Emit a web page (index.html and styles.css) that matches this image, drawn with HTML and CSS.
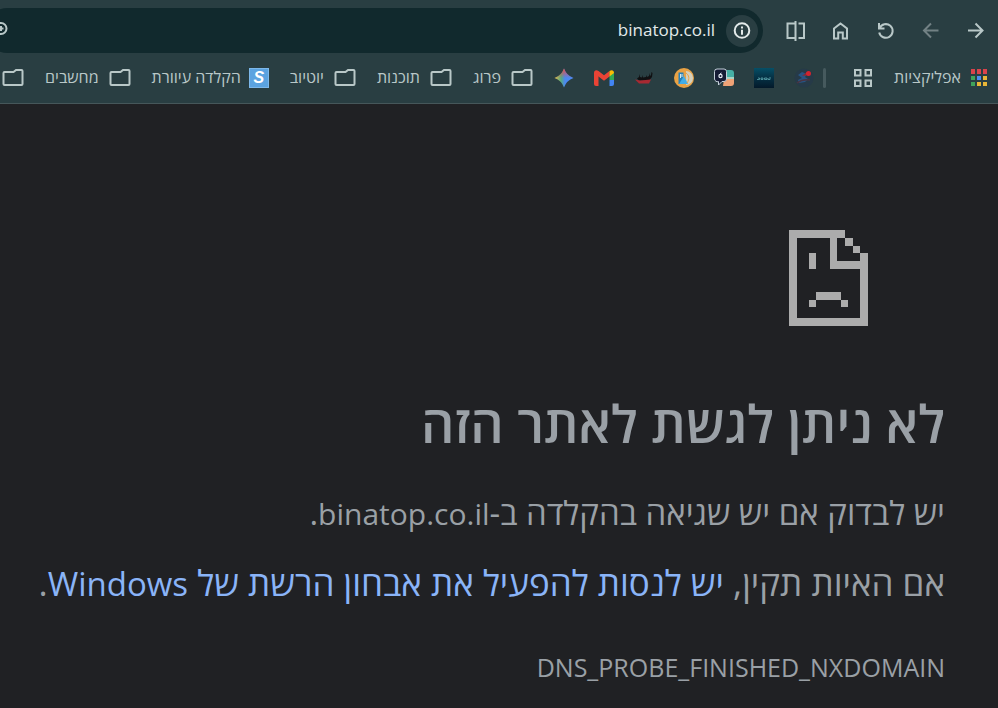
FILE: index.html
```
<!DOCTYPE html>
<html lang="he" dir="rtl">
<head>
  <meta charset="UTF-8">
  <meta name="viewport" content="width=device-width, initial-scale=1.0">
  <title>binatop.co.il</title>
  <link rel="stylesheet" href="styles.css">
</head>
<body>
<header class="browser">
  <div class="toolbar">
    <button class="nav" aria-label="קדימה">
      <svg viewBox="0 0 20 20"><path d="M2 9.500h14.500M9.500 2.500l7 7-7 7"/></svg>
    </button>
    <button class="nav" aria-label="אחורה" disabled>
      <svg viewBox="0 0 20 20"><path d="M17.500 9.500H3M10 2.500l-7 7 7 7"/></svg>
    </button>
    <button class="nav" aria-label="טעינה מחדש">
      <svg viewBox="0 0 20 20"><path d="M3 2v5.500h5.500M3.600 7.200A6.800 6.800 0 1 1 3.200 11.500"/></svg>
    </button>
    <button class="nav" aria-label="דף הבית">
      <svg viewBox="0 0 20 20"><path d="M3 7.500 9.500 2.500l6.500 5V17.500h-4.200v-6H7.200v6H3z"/></svg>
    </button>
    <button class="nav" aria-label="מסך מפוצל">
      <svg viewBox="0 0 20 20"><path d="M9.500 0v20M9.500 2.500H1.500v14.500h8M12.500 2.500H18v14.500h-5.500"/></svg>
    </button>
    <div class="omnibox">
      <button class="info" aria-label="פרטי האתר">
        <svg viewBox="0 0 20 20"><circle cx="10" cy="9.500" r="7.300"/><path d="M10 8.800v5M10 5.500v2"/></svg>
      </button>
      <input class="url" type="text" dir="ltr" value="binatop.co.il" aria-label="כתובת">
      <button class="zoom" aria-label="מרחק מתצוגה">
        <svg viewBox="0 0 20 20"><circle cx="11" cy="7.500" r="5.500"/><path d="M7 11.500l-6 6M8.500 7.500h5M11 5v5"/></svg>
      </button>
    </div>
  </div>
  <nav class="bookmarks">
    <a class="mark apps" href="#">
      <svg class="fav" viewBox="0 0 20 20">
        <path fill="#d9434b" d="M2 1h4v5H2zM8 1h4v5H8zM14 1h4v5h-4z"/>
        <path fill="#3fa35b" d="M2 8h4v4H2zM2 14h4v4H2z"/>
        <path fill="#4a8df0" d="M8 8h4v4H8z"/>
        <path fill="#e8b637" d="M14 8h4v4h-4zM8 14h4v4H8zM14 14h4v4h-4z"/>
      </svg>
      <span>אפליקציות</span>
    </a>
    <button class="groups" aria-label="קבוצות כרטיסיות">
      <svg class="fav line" viewBox="0 0 20 20"><path d="M2 2h5.500v5.500H2zM12.500 2H18v5.500h-5.500zM2 12.500h5.500V18H2zM12.500 12.500H18V18h-5.500z"/></svg>
    </button>
    <span class="divider"></span>
    <div class="icons">
      <a href="#" aria-label="חדשות">
        <svg class="fav" viewBox="0 0 20 20">
          <circle cx="10" cy="10" r="9.500" fill="#263a48"/>
          <path fill="#275484" d="M4 7 8 4l5 2-2 3 3 2-3 3-6 1-1-3 4-2z"/>
          <path d="M3 15c4-3 7-4 13-3" stroke="#4a3442" stroke-width="1.500" fill="none"/>
          <path fill="#8d2531" d="m8 8 5-4 2 3z"/><circle cx="14.500" cy="5.500" r="2.500" fill="#d2242f"/>
        </svg>
      </a>
      <a href="#" aria-label="speed">
        <svg class="fav" viewBox="0 0 20 20">
          <defs><linearGradient id="sea" x2="0" y2="1"><stop stop-color="#064f66"/><stop offset=".45" stop-color="#053347"/><stop offset="1" stop-color="#03192a"/></linearGradient></defs>
          <path fill="url(#sea)" d="M0 0h20v20H0z"/>
          <path d="M3 11.500h2.500v-1.500H4m3 0h2v1.500H7zm3.500 0H13v1.500h-2.500zm5.500-1v2.500h-2V10" stroke="#5ca7ae" stroke-width=".8" fill="none"/>
        </svg>
      </a>
      <a href="#" aria-label="צ'אט">
        <svg class="fav" viewBox="0 0 20 20">
          <path fill="#45afa5" d="M9 2h8a3 3 0 0 1 3 3v5H9z"/>
          <path fill="#a9d3c4" d="M12 9h8v2h-8z"/>
          <path fill="#efa276" d="M10 11h10v4a3 3 0 0 1-3 3h-8z"/>
          <path fill="#151b35" stroke="#c3ced8" d="M3 1h7a2.500 2.500 0 0 1 2.500 2.500V11a2.500 2.500 0 0 1-2.500 2.500H8L4.500 17v-3.500A3 3 0 0 1 .500 11V3.500A2.500 2.500 0 0 1 3 1z"/>
          <circle cx="6.500" cy="8" r="1.600" fill="none" stroke="#e6edf5" stroke-width="1.200"/><path d="m6 6 1.500-1" stroke="#e6edf5"/>
        </svg>
      </a>
      <a href="#" aria-label="בינה">
        <svg class="fav" viewBox="0 0 20 20">
          <circle cx="10" cy="10" r="10" fill="#e9a244"/>
          <path fill="#d4d0bd" d="M12 3a7 7 0 0 1 0 14z"/>
          <path fill="#2580b8" d="M4.500 4.500H9.500V16H4.500z"/>
          <path d="M6.500 6v4m1.500-4v3" stroke="#d8e7e9" fill="none"/>
          <path fill="#43aee8" d="m5 16 5-8 4 8z"/>
          <path d="M12 5c3 2 4 6 1 10" stroke="#e9a244" fill="none"/>
        </svg>
      </a>
      <a href="#" aria-label="ספינה">
        <svg class="fav" viewBox="0 0 20 20">
          <path fill="#101012" d="M3 10.500 5 9V6l1 3 2 .500V7l1 2.500 3-.500V7l1 2 2-1 .500-3L16 8l1-1 .500-3 1 1-.500 4-3 3.500H5z"/>
          <path fill="#a72932" d="m1 11.500 5 1 11-1-2 4H5z"/>
        </svg>
      </a>
      <a href="#" aria-label="Gmail">
        <svg class="fav" viewBox="0 0 20 20">
          <path fill="#ea4335" d="M0 5v11a2 2 0 0 0 2 2h2.500V6z"/>
          <path fill="#34a853" d="M15.500 5H20v7h-4.500z"/>
          <path fill="#4285f4" d="M15.500 12H20v4a2 2 0 0 1-2 2h-2.500z"/>
          <path fill="#ea4335" d="M0 5c0-3 2.500-3.500 4.500-2L10 7.200 15.500 3v5.500L10 12.700 4.500 8.500 0 6z"/>
          <path fill="#fbbc04" d="M15.500 3C17.500 1.500 20 2 20 5l-4.500 3.500z"/>
        </svg>
      </a>
      <a href="#" aria-label="Gemini">
        <svg class="fav" viewBox="0 0 20 20">
          <defs>
            <linearGradient id="star"><stop stop-color="#e8b849"/><stop offset=".35" stop-color="#55a982"/><stop offset=".55" stop-color="#4b87f0"/><stop offset="1" stop-color="#4c8bf5"/></linearGradient>
            <linearGradient id="tip" x2="0" y2="1"><stop stop-color="#ec4a46"/><stop offset=".5" stop-color="#ec4a46" stop-opacity="0"/></linearGradient>
          </defs>
          <path fill="url(#star)" d="M10 .500Q12.500 7.500 19.500 10 12.500 12.500 10 19.500 7.500 12.500 .500 10 7.500 7.500 10 .500z"/>
          <path fill="url(#tip)" d="M10 .500Q12.500 7.500 19.500 10 12.500 12.500 10 19.500 7.500 12.500 .500 10 7.500 7.500 10 .500z"/>
        </svg>
      </a>
    </div>
    <a class="mark" href="#"><svg class="folder" viewBox="0 0 22 20"><path d="M1.500 5v11q0 1 1 1h17q1 0 1-1V3q0-1-1-1h-5.500l-2.500 2H2.500q-1 0-1 1z"/></svg><span>פרוג</span></a>
    <a class="mark" href="#"><svg class="folder" viewBox="0 0 22 20"><path d="M1.500 5v11q0 1 1 1h17q1 0 1-1V3q0-1-1-1h-5.500l-2.500 2H2.500q-1 0-1 1z"/></svg><span>תוכנות</span></a>
    <a class="mark" href="#"><svg class="folder" viewBox="0 0 22 20"><path d="M1.500 5v11q0 1 1 1h17q1 0 1-1V3q0-1-1-1h-5.500l-2.500 2H2.500q-1 0-1 1z"/></svg><span>יוטיוב</span></a>
    <a class="mark typing" href="#"><b class="letter">S</b><span>הקלדה עיוורת</span></a>
    <a class="mark" href="#"><svg class="folder" viewBox="0 0 22 20"><path d="M1.500 5v11q0 1 1 1h17q1 0 1-1V3q0-1-1-1h-5.500l-2.500 2H2.500q-1 0-1 1z"/></svg><span>מחשבים</span></a>
    <a class="mark" href="#" aria-label="תיקייה"><svg class="folder" viewBox="0 0 22 20"><path d="M1.500 5v11q0 1 1 1h17q1 0 1-1V3q0-1-1-1h-5.500l-2.500 2H2.500q-1 0-1 1z"/></svg></a>
  </nav>
</header>
<main class="error">
  <svg class="sad" viewBox="57 61 237 287" shape-rendering="crispEdges">
    <path d="M57 61h168v24H57zM57 61h24v287H57zM57 324h237v24H57zM271 130h23v218h-23zM179 61h23v116h-23zM179 154h115v23H179zM225 84h23v23h-23zM248 107h23v23h-23zM116 130h23v47h-23zM139 246h74v23h-74zM116 269h23v23h-23zM213 269h22v23h-22z"/>
  </svg>
  <h1>לא ניתן לגשת לאתר הזה</h1>
  <p class="check">יש לבדוק אם יש שגיאה בהקלדה ב-<bdi>binatop.co.il</bdi>.</p>
  <p class="suggest">אם האיות תקין, <a href="#">יש לנסות להפעיל את אבחון הרשת של <bdi>Windows</bdi></a>.</p>
  <p class="code">DNS_PROBE_FINISHED_NXDOMAIN</p>
</main>
</body>
</html>
```
FILE: styles.css
```
*{
  box-sizing:border-box;
}
body{
  margin:0;
  background-color:#202124;
  color:#9aa0a6;
  font-family:"Open Sans", "Noto Sans", sans-serif;
  overflow:hidden;
}
button{
  padding:0;
  border:none;
  background:none;
  color:inherit;
}
a{
  text-decoration:none;
}
svg{
  display:block;
}
.browser{
  background-color:#293e42;
  color:#b9c8c8;
  border-bottom:1px solid #46575a;
}
.toolbar{
  display:flex;
  align-items:center;
  padding:8px 0 0;
}
.nav{
  width:45px;
  height:45px;
  display:grid;
  place-items:center;
}
.nav:disabled{
  color:#728184;
}
.nav svg, .info svg, .zoom svg{
  width:20px;
  height:20px;
  fill:none;
  stroke:currentColor;
  stroke-width:2;
}
.omnibox{
  flex:1;
  display:flex;
  align-items:center;
  height:45px;
  margin-right:10px;
  margin-left:-15px;
  padding:0 5px;
  border-radius:23px;
  background-color:#11292d;
}
.info{
  width:32px;
  height:32px;
  display:grid;
  place-items:center;
  border-radius:50%;
  background-color:#293e42;
  color:#e3eaea;
}
.url{
  flex:1;
  padding:0 11px 2px;
  border:none;
  outline:none;
  background:none;
  color:#e3eaea;
  font:17px "Open Sans", "Noto Sans", sans-serif;
  text-align:right;
}
.bookmarks{
  display:flex;
  align-items:center;
  gap:21px;
  height:50px;
  padding-right:9px;
  font-size:16px;
  line-height:20px;
  white-space:nowrap;
}
.mark{
  display:flex;
  flex-shrink:0;
  align-items:center;
  gap:10px;
  color:#b9c8c8;
}
.apps, .typing{
  gap:8px;
}
.mark span{
  padding-bottom:2px;
}
.fav{
  width:20px;
  height:20px;
}
.line{
  fill:none;
  stroke:currentColor;
  stroke-width:2;
}
.divider{
  width:3px;
  height:20px;
  margin-right:6px;
  margin-left:-12px;
  border-radius:2px;
  background-color:#465a5e;
}
.icons{
  display:flex;
  gap:20px;
}
.folder{
  width:22px;
  height:20px;
  fill:none;
  stroke:currentColor;
  stroke-width:2;
}
.letter{
  width:20px;
  height:20px;
  border:1px solid #7db8ea;
  background-color:#5ba3e0;
  color:#fff;
  font:italic bold 16px/18px "Liberation Sans", sans-serif;
  text-align:center;
}
.error{
  padding:126px 53px 0 0;
}
.sad{
  width:79px;
  height:96px;
  margin-right:77px;
  fill:#acacac;
}
h1{
  margin:62px 0 0;
  font-size:52px;
  font-weight:600;
  line-height:70px;
}
p{
  margin:0;
  white-space:nowrap;
}
.check{
  margin-top:31px;
  font-size:33px;
  line-height:48px;
}
.check bdi{
  font-size:30px;
}
.suggest{
  margin-top:19px;
  font-size:35px;
  line-height:52px;
}
.suggest bdi{
  font-size:33px;
}
.suggest a{
  color:#8ab4f8;
}
.code{
  margin-top:37px;
  font-size:25px;
  line-height:40px;
}
```
